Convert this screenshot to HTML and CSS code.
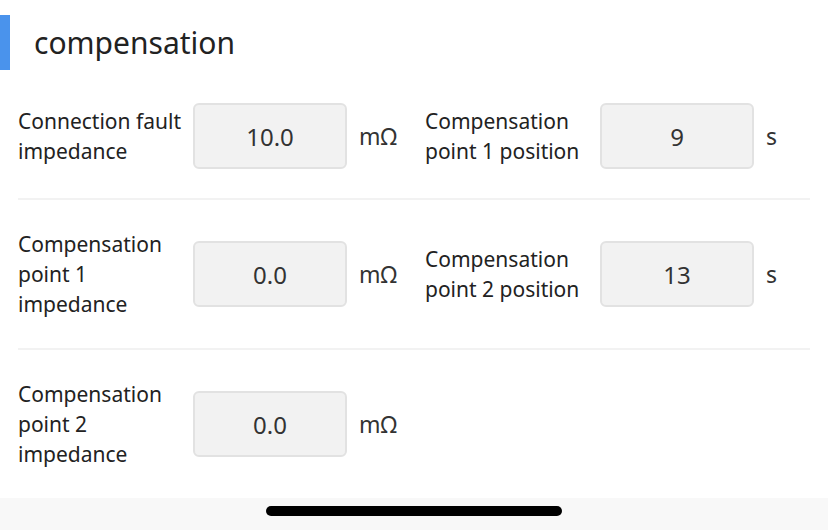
FILE: index.html
```html
<!DOCTYPE html>
<html>
<head>
<meta charset="utf-8">
<link rel="stylesheet" href="styles.css">
</head>
<body>
<div class="page">
  <div class="header">
    <div class="bar"></div>
    <div class="title">compensation</div>
  </div>
  <div class="rows">
    <div class="row">
      <div class="field left">
        <div class="label">Connection fault impedance</div>
        <div class="input">10.0</div>
        <div class="unit">mΩ</div>
      </div>
      <div class="field right">
        <div class="label">Compensation point 1 position</div>
        <div class="input">9</div>
        <div class="unit">s</div>
      </div>
    </div>
    <div class="divider"></div>
    <div class="row">
      <div class="field left">
        <div class="label narrow">Compensation point 1 impedance</div>
        <div class="input">0.0</div>
        <div class="unit">mΩ</div>
      </div>
      <div class="field right">
        <div class="label">Compensation point 2 position</div>
        <div class="input">13</div>
        <div class="unit">s</div>
      </div>
    </div>
    <div class="divider"></div>
    <div class="row">
      <div class="field left">
        <div class="label narrow">Compensation point 2 impedance</div>
        <div class="input">0.0</div>
        <div class="unit">mΩ</div>
      </div>
    </div>
  </div>
  <div class="footer">
    <div class="home"></div>
  </div>
</div>
</body>
</html>
```
FILE: styles.css
```css
html, body {
  margin: 0;
  padding: 0;
  background: #ffffff;
}
.page {
  width: 828px;
  height: 530px;
  font-family: "Noto Sans", "Liberation Sans", sans-serif;
  color: #222222;
  display: flex;
  flex-direction: column;
  overflow: hidden;
}
.header {
  display: flex;
  align-items: center;
  margin-top: 15px;
  height: 55px;
  margin-bottom: 4px;
}
.bar {
  width: 10px;
  height: 55px;
  background: #4a93ec;
}
.title {
  margin-left: 24px;
  font-size: 30px;
  line-height: 40px;
  color: #222222;
}
.rows {
  padding: 0 18px;
  flex: 1;
}
.row {
  display: flex;
  padding: 29px 0;
}
.divider {
  height: 2px;
  background: #f2f2f2;
}
.field {
  display: flex;
  align-items: center;
}
.field.left {
  width: 407px;
}
.field.right {
  width: 385px;
}
.label {
  width: 175px;
  font-size: 21px;
  line-height: 30px;
  color: #222222;
}
.label.narrow {
  width: 165px;
  margin-right: 10px;
}
.input {
  box-sizing: border-box;
  width: 154px;
  height: 66px;
  border: 2px solid #e2e2e2;
  border-radius: 6px;
  background: #f2f2f2;
  display: flex;
  align-items: center;
  justify-content: center;
  font-size: 24px;
  color: #333333;
}
.unit {
  margin-left: 12px;
  font-size: 23px;
  color: #333333;
}
.footer {
  height: 33px;
  background: #f8f8f8;
  display: flex;
  justify-content: center;
  padding-top: 8px;
  box-sizing: border-box;
}
.home {
  width: 296px;
  height: 10px;
  border-radius: 5px;
  background: #000000;
}
```
